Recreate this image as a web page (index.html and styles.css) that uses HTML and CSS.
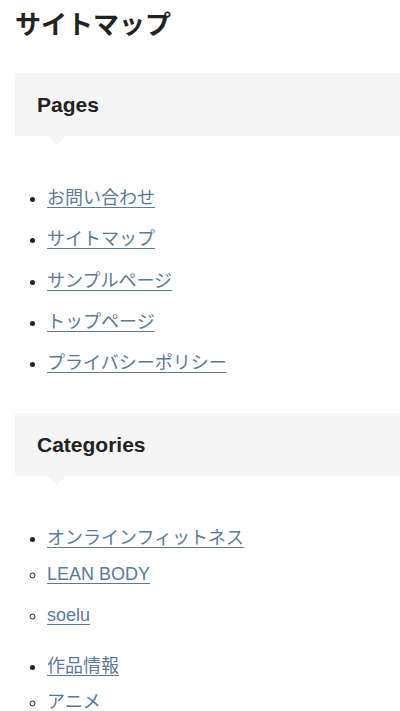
FILE: index.html
```html
<!DOCTYPE html>
<html lang="ja">
<head>
    <meta charset="UTF-8">
    <meta name="viewport" content="width=device-width, initial-scale=1.0">
    <title>サイトマップ</title>
    <link rel="stylesheet" href="styles.css">
</head>
<body>
    <main class="page">
        <h1 class="page-title">サイトマップ</h1>

        <h2 class="section-head">Pages</h2>
        <ul class="sitemap">
            <li><a href="#">お問い合わせ</a></li>
            <li><a href="#">サイトマップ</a></li>
            <li><a href="#">サンプルページ</a></li>
            <li><a href="#">トップページ</a></li>
            <li><a href="#">プライバシーポリシー</a></li>
        </ul>

        <h2 class="section-head">Categories</h2>
        <ul class="sitemap">
            <li><a href="#">オンラインフィットネス</a>
                <ul>
                    <li><a href="#">LEAN BODY</a></li>
                    <li><a href="#">soelu</a></li>
                </ul>
            </li>
            <li><a href="#">作品情報</a>
                <ul>
                    <li><a href="#">アニメ</a></li>
                </ul>
            </li>
        </ul>
    </main>
</body>
</html>
```

FILE: styles.css
```css
body { margin: 0; font-family: "Liberation Sans", "Noto Sans CJK JP", sans-serif; color: #222; background: #fff; }
.page { padding: 0 0 0 15px; overflow: hidden; }

.page-title { margin: 0; font-size: 26px; line-height: 50px; font-weight: bold; }

.section-head { position: relative; margin: 23px 0 0; padding-left: 22px; height: 63px; line-height: 63px; font-size: 21px; font-weight: bold; background: #f5f5f5; }
.section-head::after { content: ""; position: absolute; left: 33px; top: 63px; border-top: 9px solid #f5f5f5; border-left: 9px solid transparent; border-right: 9px solid transparent; }

.sitemap { margin: 44px 0 32px; padding-left: 32px; font-size: 18px; line-height: 36px; }
.sitemap li { margin-bottom: 5.25px; }
.sitemap ul { padding-left: 0; margin: 0 0 15px; list-style: circle; }
.sitemap a { color: #5a7a97; text-decoration: underline; text-underline-offset: 3px; }
```
